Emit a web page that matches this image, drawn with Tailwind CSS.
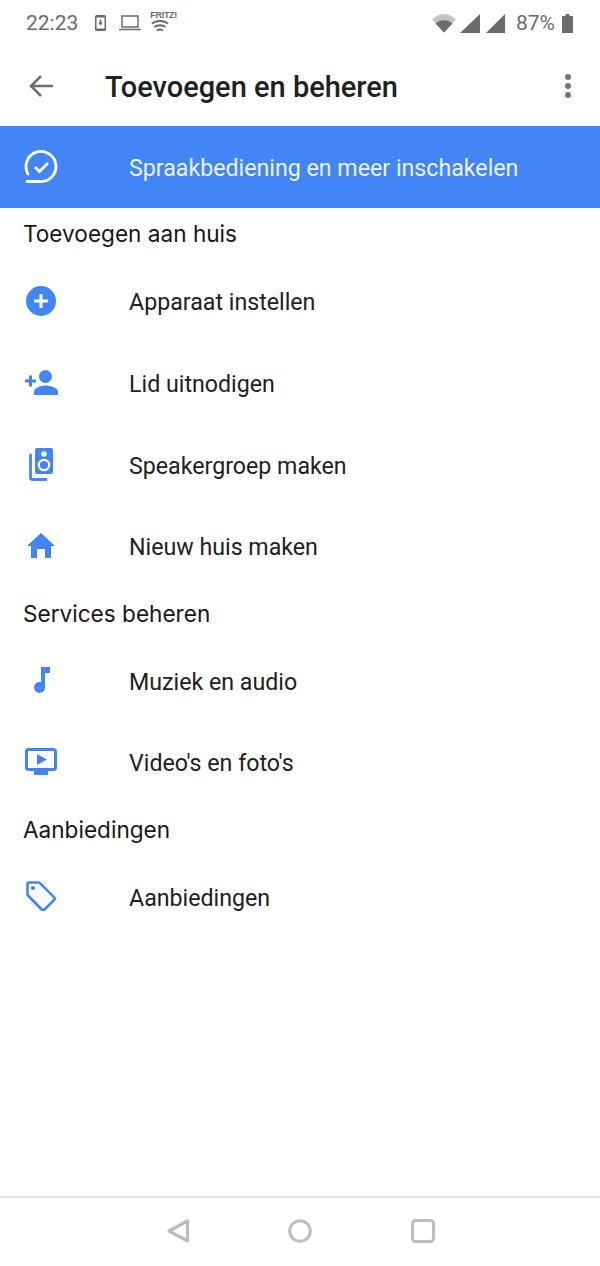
<!DOCTYPE html>
<html>
<head>
    <title>Toevoegen en beheren</title>
    <meta name="viewport" content="width=device-width, initial-scale=1.0" />
    <script src="https://cdn.jsdelivr.net/npm/@tailwindcss/browser@4"></script>
</head>

<body class="bg-white font-['Roboto',sans-serif]">
    <div class="flex flex-col w-[600px] h-[1266px] overflow-hidden">

        <!-- status bar -->
        <div class="flex items-center h-[46px] pl-[26px] pr-[27px] text-[#6b6b6b]">
            <span class="text-[21px] leading-none">22:23</span>
            <svg class="ml-[17px] w-[11px] h-[16px]" viewBox="0 0 11 16">
                <rect width="11" height="16" rx="1.5" fill="#6b6b6b" />
                <rect x="1.5" y="2.5" width="8" height="11" fill="#fff" />
                <path d="M4.7 4.5h1.6v3h1.5L5.5 10.5 3.200 7.500h1.500z" fill="#6b6b6b" />
            </svg>
            <svg class="ml-[13px] w-[22px] h-[16px]" viewBox="0 0 22 16">
                <path d="M3 1h16v11H3z" fill="none" stroke="#6b6b6b" stroke-width="1.500" />
                <path d="M0 14.500h22" stroke="#6b6b6b" stroke-width="1.500" />
            </svg>
            <div class="ml-[9px] flex flex-col items-start -mt-[4px] w-[24px]">
                <span class="text-[9px] leading-[10px] font-bold tracking-[-0.3px] font-['Liberation_Sans',sans-serif]">FRITZ!</span>
                <svg class="ml-[1px] w-[18px] h-[12px]" viewBox="0 0 18 12">
                    <path d="M1 3.500c4.500-3.500 11.500-3.500 16 0M3.500 7c3-2.300 8-2.300 11 0M6 10.500c1.700-1.200 4.300-1.200 6 0" fill="none" stroke="#6b6b6b" stroke-width="2" />
                </svg>
            </div>
            <svg class="ml-auto w-[26px] h-[20px]" viewBox="0 0 26 20">
                <path d="M1 6.500C8-1 18-1 25 6.500L13 19.500z" fill="#c4c4c4" />
                <path d="M4.500 10.500c5-4.300 12-4.300 17 0L13 19.500z" fill="#6b6b6b" />
            </svg>
            <svg class="ml-[3px] w-[20px] h-[19px]" viewBox="0 0 20 19"><path d="M0 19L20 0v19z" fill="#6b6b6b" /></svg>
            <svg class="ml-[6px] w-[19px] h-[19px]" viewBox="0 0 19 19"><path d="M0 19L19 0v19z" fill="#6b6b6b" /></svg>
            <span class="ml-[11px] text-[21px] leading-none">87%</span>
            <svg class="ml-[7px] w-[11px] h-[19px]" viewBox="0 0 11 19">
                <path d="M3.500 0h4v2H11v17H0V2h3.500z" fill="#6b6b6b" />
            </svg>
        </div>

        <!-- toolbar -->
        <div class="flex items-center h-[80px] pl-[28px] pr-[29px]">
            <svg class="w-[26px] h-[24px]" viewBox="0 0 26 24">
                <path d="M25 12H3M13 2L3 12l10 10" fill="none" stroke="#6e6e6e" stroke-width="2.500" />
            </svg>
            <h1 class="ml-[51px] pt-[2px] text-[29px] font-medium text-[#202124] leading-none">Toevoegen en beheren</h1>
            <div class="ml-auto flex flex-col gap-[3px]">
                <span class="w-[6px] h-[6px] rounded-full bg-[#757575]"></span>
                <span class="w-[6px] h-[6px] rounded-full bg-[#757575]"></span>
                <span class="w-[6px] h-[6px] rounded-full bg-[#757575]"></span>
            </div>
        </div>

        <!-- banner -->
        <div class="flex items-center h-[82px] bg-[#4285f4] text-white">
            <div class="w-[129px] pl-[24px] shrink-0">
                <svg class="w-[34px] h-[34px]" viewBox="0 0 34 34">
                    <path d="M3 31.500H17A15 15 0 1 0 4 24" fill="none" stroke="#fff" stroke-width="2.800" stroke-linecap="round" />
                    <path d="M11 17l4.500 4.500L24 13" fill="none" stroke="#fff" stroke-width="2.800" />
                </svg>
            </div>
            <span class="pt-[3px] text-[23.2px] leading-none text-white/90">Spraakbediening en meer inschakelen</span>
        </div>

        <!-- Toevoegen aan huis -->
        <h2 class="flex items-center h-[53px] pl-[23px] pb-[2px] text-[22.6px] font-normal text-[#171717] font-['Inter',sans-serif]">Toevoegen aan huis</h2>

        <div class="flex items-center h-[82px]">
            <div class="w-[129px] pl-[26px] pb-[3px] shrink-0">
                <svg class="w-[30px] h-[30px]" viewBox="0 0 30 30">
                    <circle cx="15" cy="15" r="15" fill="#4285f4" />
                    <path d="M15 8v14M8 15h14" stroke="#fff" stroke-width="3" />
                </svg>
            </div>
            <span class="pt-[2px] text-[23.2px] leading-none text-[#202124]">Apparaat instellen</span>
        </div>
        <div class="flex items-center h-[82px]">
            <div class="w-[129px] pl-[25px] pb-[3px] shrink-0">
                <svg class="w-[33px] h-[25px]" viewBox="0 0 33 25">
                    <circle cx="20.500" cy="6.500" r="6.500" fill="#4285f4" />
                    <path d="M9 25v-3c0-4.500 7.500-6.500 11.500-6.500S33 17.500 33 22v3z" fill="#4285f4" />
                    <path d="M0 11h11M5.500 5.500v11" stroke="#4285f4" stroke-width="3" />
                </svg>
            </div>
            <span class="pt-[2px] text-[23.2px] leading-none text-[#202124]">Lid uitnodigen</span>
        </div>
        <div class="flex items-center h-[81px]">
            <div class="w-[129px] pl-[29px] pb-[3px] shrink-0">
                <svg class="w-[24px] h-[33px]" viewBox="0 0 24 33">
                    <path d="M1.500 7v22.500c0 1.500.8 2 2 2H17" fill="none" stroke="#4285f4" stroke-width="2.800" stroke-linecap="round" />
                    <rect x="6" y="0" width="18" height="26" rx="2" fill="#4285f4" />
                    <circle cx="15" cy="6" r="2.700" fill="#fff" />
                    <circle cx="15" cy="17" r="5.200" fill="none" stroke="#fff" stroke-width="2.200" />
                </svg>
            </div>
            <span class="pt-[2px] text-[23.2px] leading-none text-[#202124]">Speakergroep maken</span>
        </div>
        <div class="flex items-center h-[82px]">
            <div class="w-[129px] pl-[27px] pb-[3px] shrink-0">
                <svg class="w-[28px] h-[25px]" viewBox="0 0 28 25">
                    <path d="M14 0L28 13h-4v12h-6v-9h-8v9H4V13H0z" fill="#4285f4" />
                </svg>
            </div>
            <span class="pt-[2px] text-[23.2px] leading-none text-[#202124]">Nieuw huis maken</span>
        </div>

        <!-- Services beheren -->
        <h2 class="flex items-center h-[53px] pl-[23px] pb-[2px] text-[22.6px] font-normal text-[#171717] font-['Inter',sans-serif]">Services beheren</h2>

        <div class="flex items-center h-[81px]">
            <div class="w-[129px] pl-[32px] pb-[3px] shrink-0">
                <svg class="w-[18px] h-[26px]" viewBox="0 0 18 26">
                    <path d="M9 0h9v6h-5v14.500A5.500 5.500 0 1 1 9 15.200z" fill="#4285f4" />
                </svg>
            </div>
            <span class="pt-[2px] text-[23.2px] leading-none text-[#202124]">Muziek en audio</span>
        </div>
        <div class="flex items-center h-[82px]">
            <div class="w-[129px] pl-[25px] pb-[3px] shrink-0">
                <svg class="w-[32px] h-[27px]" viewBox="0 0 32 27">
                    <rect x="1.500" y="1.500" width="29" height="20" rx="2" fill="none" stroke="#4285f4" stroke-width="3" />
                    <path d="M9 23h14v4H9zM12 6l10 5.500L12 17z" fill="#4285f4" />
                </svg>
            </div>
            <span class="pt-[2px] text-[23.2px] leading-none text-[#202124]">Video's en foto's</span>
        </div>

        <!-- Aanbiedingen -->
        <h2 class="flex items-center h-[53px] pl-[23px] pb-[2px] text-[22.6px] font-normal text-[#171717] font-['Inter',sans-serif]">Aanbiedingen</h2>

        <div class="flex items-center h-[81px]">
            <div class="w-[129px] pl-[26px] pb-[3px] shrink-0">
                <svg class="w-[30px] h-[30px]" viewBox="0 0 30 30">
                    <path d="M3 1.500h9.500c.6 0 1 .2 1.400.6L28 16.200c.8.8.8 2 0 2.800L18.500 28.500c-.8.8-2 .8-2.800 0L2 14.500c-.4-.4-.5-.8-.5-1.400V3c0-.8.7-1.500 1.500-1.500z" fill="none" stroke="#4285f4" stroke-width="2.600" stroke-linejoin="round" />
                    <circle cx="7" cy="7" r="2.100" fill="#4285f4" />
                </svg>
            </div>
            <span class="pt-[2px] text-[23.2px] leading-none text-[#202124]">Aanbiedingen</span>
        </div>

        <!-- nav bar -->
        <div class="mt-auto flex items-center justify-center h-[70px] pb-[2px] border-t-2 border-[#e2e2e2] gap-[98px]">
            <svg class="w-[24px] h-[26px]" viewBox="0 0 24 26">
                <path d="M21.500 3v20L3 13z" fill="none" stroke="#bdbdbd" stroke-width="3.200" stroke-linejoin="round" />
            </svg>
            <svg class="w-[24px] h-[24px]" viewBox="0 0 24 24">
                <circle cx="12" cy="12" r="10.300" fill="none" stroke="#bdbdbd" stroke-width="3" />
            </svg>
            <svg class="ml-[1px] w-[24px] h-[24px]" viewBox="0 0 24 24">
                <rect x="1.500" y="1.500" width="21" height="21" rx="3" fill="none" stroke="#bdbdbd" stroke-width="3" />
            </svg>
        </div>
    </div>
</body>

</html>
